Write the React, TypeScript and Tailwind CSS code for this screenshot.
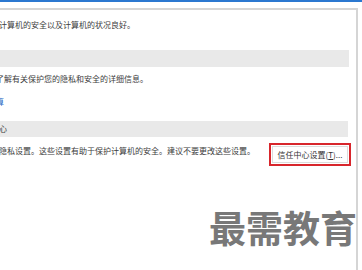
export default function App() {
  const font = { fontFamily: '"Noto Sans CJK SC", "Noto Sans", sans-serif' };
  return (
    <div className="relative w-[362px] h-[270px] overflow-hidden bg-white text-[#3c3c3c]" style={font}>
      {/* window accent */}
      <div className="h-[2px] bg-[#2b78d0]" />
      <div className="h-[6px] bg-white" />

      {/* options panel */}
      <div className="w-[358px] h-[262px] border-t-2 border-r-2 border-[#d5d5d5] overflow-hidden">
        <div className="mt-[8px] h-[14px] flex items-center -ml-[1px] text-[8px] whitespace-nowrap">
          计算机的安全以及计算机的状况良好。
        </div>

        <div className="mt-[18px] h-[17px] w-[349px] bg-[#e9e9e9]" />

        <div className="mt-[5px] h-[14px] flex items-center -ml-[4px] text-[8px] whitespace-nowrap">
          了解有关保护您的隐私和安全的详细信息。
        </div>

        <div className="mt-[9px] h-[14px] flex items-center -ml-[4px] text-[8px] text-[#2b6cc4] whitespace-nowrap">
          算
        </div>

        <div className="mt-[12px] h-[16px] w-[349px] bg-[#e9e9e9] flex items-center -ml-[1px] text-[8px] whitespace-nowrap">
          心
        </div>

        <div className="mt-[6px] flex items-start">
          <div className="mt-[1px] h-[14px] flex items-center -ml-[1px] text-[8px] whitespace-nowrap">
            隐私设置。这些设置有助于保护计算机的安全。建议不要更改这些设置。
          </div>
          <div className="ml-auto mr-[5px] w-[82px] h-[23px] border-2 border-[#d8262c] p-[1px]">
            <div className="h-full border border-[#dcdcdc] bg-white flex items-center justify-center text-[8px] text-[#333] whitespace-nowrap">
              信任中心设置(<span className="underline">T</span>)...
            </div>
          </div>
        </div>
      </div>

      {/* watermark */}
      <div className="absolute left-[209px] top-[209px] text-[37px] font-bold leading-none text-[#787878] whitespace-nowrap">
        最需教育
      </div>
    </div>
  );
}
